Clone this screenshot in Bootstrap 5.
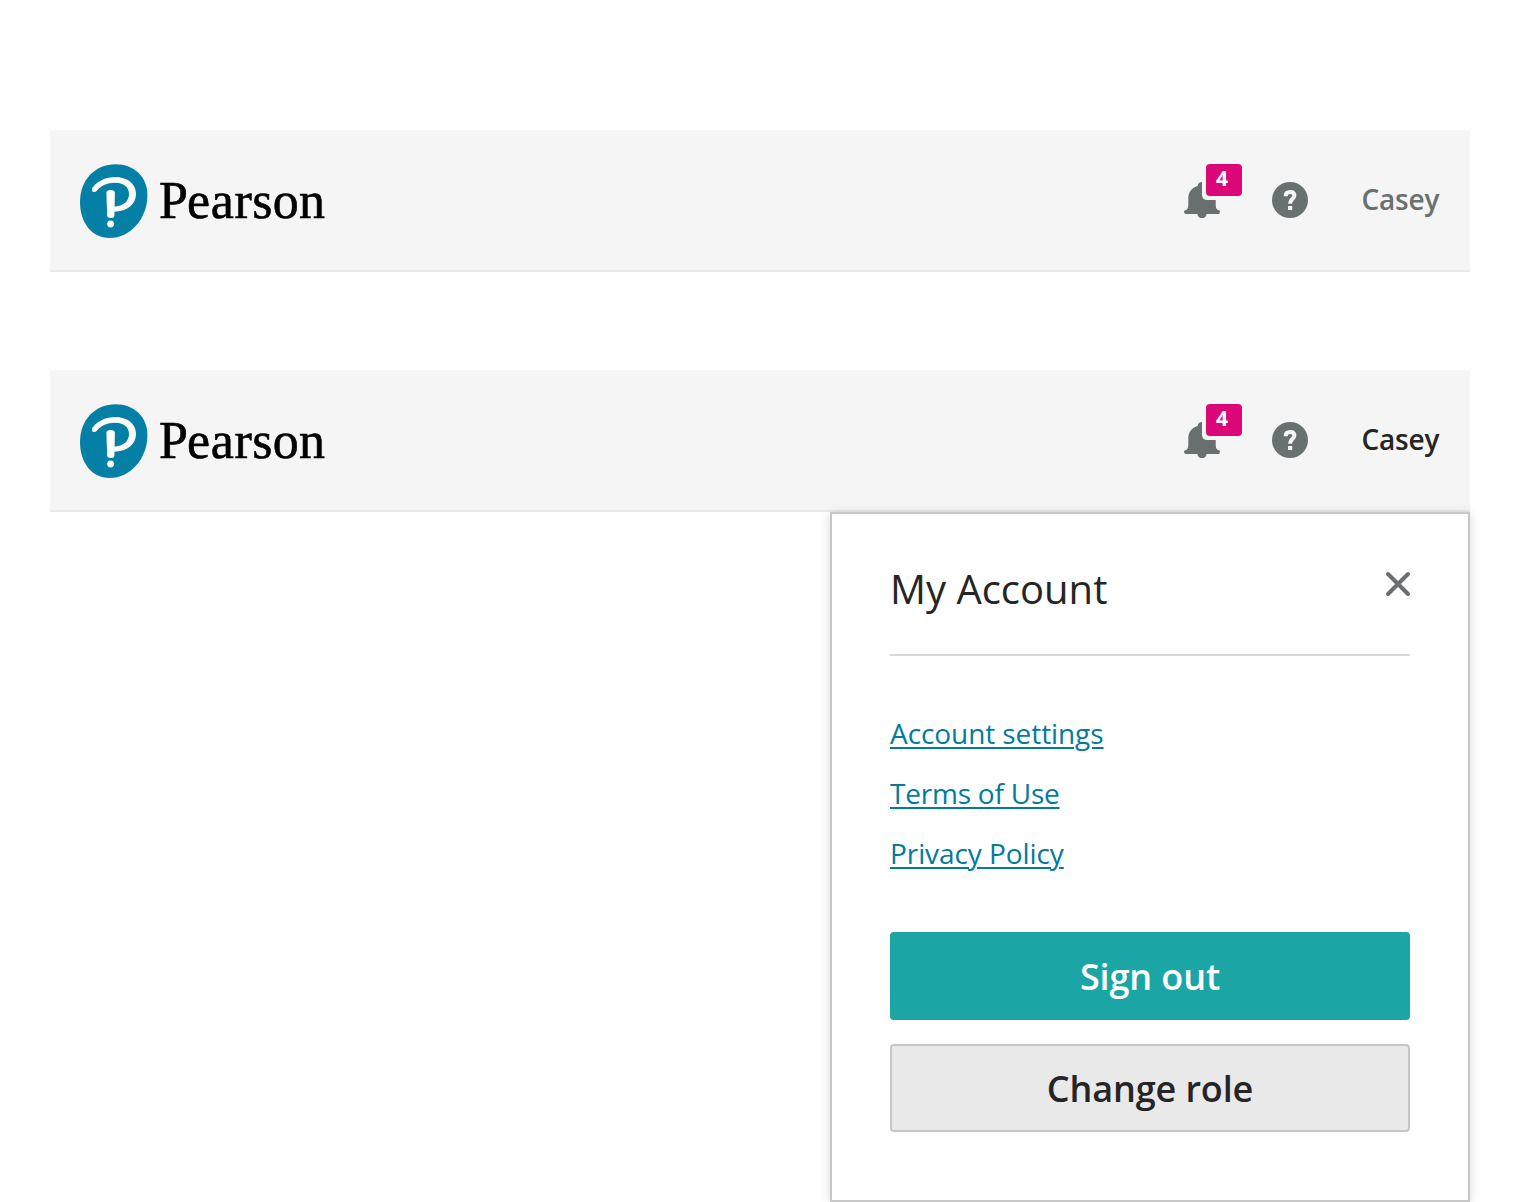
<!DOCTYPE html>
<html lang="en">
<head>
<meta charset="utf-8">
<meta name="viewport" content="width=device-width, initial-scale=1">
<title>Pearson – My Account</title>
<link href="https://cdn.jsdelivr.net/npm/bootstrap@5.3.0/dist/css/bootstrap.min.css" rel="stylesheet">
<style>
body { font-family: "Open Sans", sans-serif; color: #252525; background: #fff; }
.page-wrap { padding: 130px 50px 0; height: 1202px; overflow: hidden; }
.app-header { height: 142px; padding: 0 30px; background: #f5f5f5; border-bottom: 2px solid #e9e9e9; }
.header-gap { margin-bottom: 98px; }
.brand-logo { display: block; }
.wordmark { font-family: "Liberation Serif", serif; font-size: 52px; stroke: #000; stroke-width: .6px; }
.tool-icon { width: 36px; height: 36px; color: #6a7070; }
.tool-icon svg { display: block; }
.count-badge { left: 22px; top: -18px; width: 36px; height: 32px; border-radius: 4px; background: #db0678; font-size: 21px; font-weight: 700; line-height: 28px; padding-right: 4px; }
.help-icon { margin-left: 52px; }
.user-name { margin-left: 53.5px; width: 78.5px; font-size: 28px; font-weight: 600; line-height: 36px; padding-bottom: 2px; letter-spacing: -.2px; color: #6a7070; white-space: nowrap; }
.user-name.is-open { color: #252525; }
.account-panel { width: 640px; height: 690px; padding: 50px 58px 0; border: 2px solid #c7c7c7; box-shadow: 0 2px 10px rgba(0,0,0,.15); background: #fff; }
.panel-head { height: 92px; border-bottom: 2px solid #d9d9d9; }
.panel-title { font-size: 40px; font-weight: 400; line-height: 50px; }
.close-x { width: 24px; height: 24px; margin-top: 8px; color: #6a7070; }
.close-x svg { display: block; overflow: visible; }
.link-list { padding-top: 57px; gap: 20px; }
.link-list a { font-size: 28px; line-height: 40px; letter-spacing: -.08px; color: #047a9c; text-decoration-thickness: 2px; text-underline-offset: 3px; }
.link-list .link-terms { letter-spacing: -.22px; }
.panel-actions { margin-top: 59px; gap: 24px; }
.panel-btn { height: 88px; padding: 2px 0 0; font-size: 36px; letter-spacing: -.12px; font-weight: 600; border: 2px solid; border-radius: 4px; }
.btn-signout, .btn-signout:hover { background: #1ca5a5; border-color: #1ca5a5; color: #fff; }
.btn-role, .btn-role:hover { background: #e9e9e9; border-color: #c7c7c7; color: #252525; }
</style>
</head>
<body>
<svg width="0" height="0" class="position-absolute" aria-hidden="true">
  <symbol id="pearson-mark" viewBox="0 0 68 74">
    <path fill="#047fa5" d="M35.7 0.300C54 0.300 67.400 13 67.400 31C67.400 55 50 74 29.8 74C12 74 0 59 0 38C0 16 15 0.300 35.7 0.300Z"/>
    <path fill="#fff" d="M12.6 27.4C11.4 26 11.8 24.4 13 23C18 17 26 13.1 35 13.1C47 13.1 56 19.500 56 30C56 40 47.500 47.600 34 47.700V42.700C43 42 49 37.500 49 30C49 23 43.500 18.800 35 18.800C27 18.800 21 21.800 17 26.500C15.800 28 13.800 28.600 12.600 27.400Z"/>
    <path fill="#fff" d="M26.400 29Q26.400 26 30.600 26Q34.900 26 34.900 29L34.400 51.500Q34.300 54 30.800 54Q27.300 54 27.200 51.500Z"/>
    <circle cx="30.600" cy="60" r="3.400" fill="#fff"/>
  </symbol>
  <symbol id="bell" viewBox="0 0 36 36">
    <path fill="currentColor" d="M18 0V12.500Q18 18 23.500 18H31.700V23Q31.700 27 34 28A2 2 0 0 1 34 32H22.600A4.600 4.200 0 0 1 13.400 32H2A2 2 0 0 1 2 28Q4.300 27 4.300 23V16.500C4.300 10 8 5.500 13.500 4C14 1.500 15.500 0 18 0Z"/>
  </symbol>
  <symbol id="help" viewBox="0 0 36 36">
    <circle cx="18" cy="18" r="18" fill="currentColor"/>
    <path d="M13.600 14.200C13.600 11.300 15.400 9.900 18.100 9.900C20.800 9.900 22.400 11.400 22.400 13.600C22.400 17 18.100 16.700 18.100 21.700" fill="none" stroke="#f5f5f5" stroke-width="4"/>
    <rect x="16" y="24" width="4.200" height="4" rx=".6" fill="#f5f5f5"/>
  </symbol>
</svg>

<main class="page-wrap">
  <header class="app-header header-gap d-flex align-items-center justify-content-between">
    <svg class="brand-logo" width="250" height="76" viewBox="0 0 250 76" role="img" aria-label="Pearson">
      <use href="#pearson-mark" x="0" y="2" width="68" height="74"/>
      <text class="wordmark" x="79 107 130.8 154.400 172.200 192.800 219" y="56">Pearson</text>
    </svg>
    <div class="d-flex align-items-center">
      <div class="tool-icon position-relative">
        <svg width="36" height="36"><use href="#bell"/></svg>
        <span class="count-badge position-absolute text-white text-center">4</span>
      </div>
      <div class="tool-icon help-icon"><svg width="36" height="36"><use href="#help"/></svg></div>
      <div class="user-name">Casey</div>
    </div>
  </header>

  <header class="app-header d-flex align-items-center justify-content-between">
    <svg class="brand-logo" width="250" height="76" viewBox="0 0 250 76" role="img" aria-label="Pearson">
      <use href="#pearson-mark" x="0" y="2" width="68" height="74"/>
      <text class="wordmark" x="79 107 130.8 154.400 172.200 192.800 219" y="56">Pearson</text>
    </svg>
    <div class="d-flex align-items-center">
      <div class="tool-icon position-relative">
        <svg width="36" height="36"><use href="#bell"/></svg>
        <span class="count-badge position-absolute text-white text-center">4</span>
      </div>
      <div class="tool-icon help-icon"><svg width="36" height="36"><use href="#help"/></svg></div>
      <div class="user-name is-open">Casey</div>
    </div>
  </header>

  <section class="account-panel ms-auto">
    <div class="panel-head d-flex align-items-start justify-content-between">
      <h1 class="panel-title m-0">My Account</h1>
      <div class="close-x"><svg width="24" height="24" viewBox="0 0 24 24"><path d="M2 2L22 22M22 2L2 22" stroke="currentColor" stroke-width="4" stroke-linecap="round"/></svg></div>
    </div>
    <nav class="link-list d-flex flex-column align-items-start">
      <a href="#">Account settings</a>
      <a href="#" class="link-terms">Terms of Use</a>
      <a href="#">Privacy Policy</a>
    </nav>
    <div class="panel-actions d-grid">
      <button type="button" class="btn panel-btn btn-signout">Sign out</button>
      <button type="button" class="btn panel-btn btn-role">Change role</button>
    </div>
  </section>
</main>
<script src="https://cdn.jsdelivr.net/npm/bootstrap@5.3.0/dist/js/bootstrap.bundle.min.js"></script>
</body>
</html>
